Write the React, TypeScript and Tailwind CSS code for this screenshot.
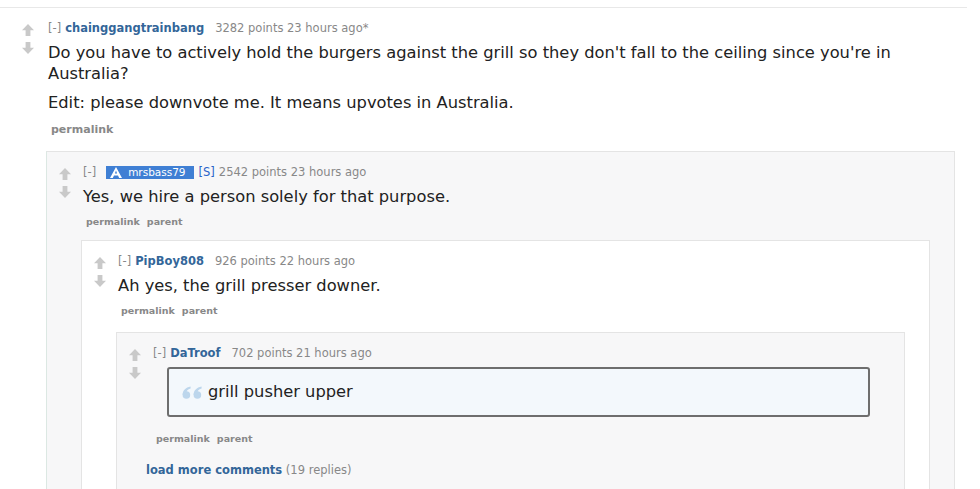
import React from "react";

const FONT = "font-['DejaVu_Sans',Verdana,sans-serif]";

const Arrow = ({ down }: { down?: boolean }) => (
  <svg width="12" height="12" viewBox="0 0 12 12" className={down ? "rotate-180" : ""}>
    <path d="M6 0L12 6.2H8.4V12H3.6V6.2H0Z" fill="#c9c9c9" />
  </svg>
);

const QuoteMark = () => (
  <svg width="21" height="13" viewBox="0 0 21 13">
    {[0, 11].map((x) => (
      <g key={x} transform={`translate(${x} 0)`} fill="#bcd6ec">
        <circle cx="4.4" cy="9" r="3.8" />
        <path d="M0.6 9C0.6 4.6 3.5 1.6 8.6 0.6L8.6 2.6C5.6 3.6 4.4 5.2 4.5 6.6Z" />
      </g>
    ))}
  </svg>
);

const Badge = ({ name }: { name: string }) => (
  <span className="ml-[10px] inline-flex h-[13px] items-center gap-[6px] bg-[#3f7fd4] pl-[4px] pr-[8px] text-[10.5px] leading-[13px] text-white">
    <svg width="12" height="11" viewBox="0 0 12 11">
      <path
        fillRule="evenodd"
        d="M6 0L12 11H9.2L8 8.6H4L2.8 11H0ZM6 3.6L4.9 6.4H7.1Z"
        fill="#fff"
      />
    </svg>
    {name}
  </span>
);

type CommentProps = {
  user: React.ReactNode;
  meta: string;
  metaGap?: string;
  gap?: string;
  body: React.ReactNode;
  links: string[];
  bigLinks?: boolean;
  linksGap?: string;
  children?: React.ReactNode;
  childGap?: string;
};

const Comment = ({
  user,
  meta,
  metaGap = "ml-[11px]",
  gap = "ml-[12px]",
  body,
  links,
  bigLinks,
  linksGap = "mt-[9px]",
  children,
  childGap = "mt-[12px]",
}: CommentProps) => (
  <div className="flex">
    <div className="flex w-[12px] shrink-0 flex-col gap-[6px] pt-[3px]">
      <Arrow />
      <Arrow down />
    </div>
    <div className={`${gap} min-w-0 flex-1`}>
      <div className="flex items-center text-[11.5px] leading-[14px] text-[#888]">
        <span>[-]</span>
        {user}
        <span className={`${metaGap} whitespace-nowrap`}>{meta}</span>
      </div>
      <div className="mt-[7px] text-[16.3px] leading-[21px] text-[#222]">{body}</div>
      <div
        className={`${linksGap} flex gap-[7px] pl-[3px] font-bold text-[#888] ${
          bigLinks ? "text-[11px] leading-[12px]" : "text-[9.5px] leading-[12px]"
        }`}
      >
        {links.map((l) => (
          <span key={l}>{l}</span>
        ))}
      </div>
      {children && <div className={`${childGap} ml-[-2px]`}>{children}</div>}
    </div>
  </div>
);

const Box = ({ bg, children }: { bg: string; children: React.ReactNode }) => (
  <div className={`border border-[#e4e4e4] pb-[60px] pl-[12px] pr-[24px] pt-[13px] ${bg}`}>{children}</div>
);

const User = ({ name }: { name: string }) => (
  <span className="ml-[4px] font-bold text-[#369]">{name}</span>
);

export default function App() {
  return (
    <div className={`h-[489px] w-[980px] overflow-hidden bg-white ${FONT}`}>
      <div className="mt-[7px] w-[967px] border-t border-[#e8e8e8] pl-[22px] pr-[12px] pt-[13px]">
        <Comment
          user={<User name="chainggangtrainbang" />}
          meta="3282 points 23 hours ago*"
          gap="ml-[14px]"
          bigLinks
          linksGap="mt-[11px]"
          childGap="mt-[15px]"
          links={["permalink"]}
          body={
            <>
              <p>
                Do you have to actively hold the burgers against the grill so they don't fall to the ceiling since
                you're in Australia?
              </p>
              <p className="mt-[8px]">Edit: please downvote me. It means upvotes in Australia.</p>
            </>
          }
        >
          <Box bg="bg-[#f7f7f8] border-l-[#dce8e3]">
            <Comment
              user={
                <>
                  <Badge name="mrsbass79" />
                  <span className="ml-[5px] text-[#2a63c9]">[S]</span>
                </>
              }
              meta="2542 points 23 hours ago"
              metaGap="ml-[4px]"
              body={<p>Yes, we hire a person solely for that purpose.</p>}
              links={["permalink", "parent"]}
            >
              <Box bg="bg-white">
                <Comment
                  user={<User name="PipBoy808" />}
                  meta="926 points 22 hours ago"
                  childGap="mt-[15px]"
                  body={<p>Ah yes, the grill presser downer.</p>}
                  links={["permalink", "parent"]}
                >
                  <Box bg="bg-[#f7f7f8]">
                    <Comment
                      user={<User name="DaTroof" />}
                      meta="702 points 21 hours ago"
                      linksGap="mt-[16px]"
                      body={
                        <div className="ml-[14px] mr-[10px] mt-[4px] flex items-center gap-[5px] rounded-[3px] border-2 border-[#6e6e6e] bg-[#f3f8fc] py-[12px] pl-[13px] leading-[22px]">
                          <QuoteMark />
                          <span>grill pusher upper</span>
                        </div>
                      }
                      links={["permalink", "parent"]}
                    />
                    <div className="ml-[17px] mt-[18px] text-[11.5px] leading-[14px]">
                      <span className="font-bold text-[#369]">load more comments</span>
                      <span className="text-[#888]"> (19 replies)</span>
                    </div>
                  </Box>
                </Comment>
              </Box>
            </Comment>
          </Box>
        </Comment>
      </div>
    </div>
  );
}
